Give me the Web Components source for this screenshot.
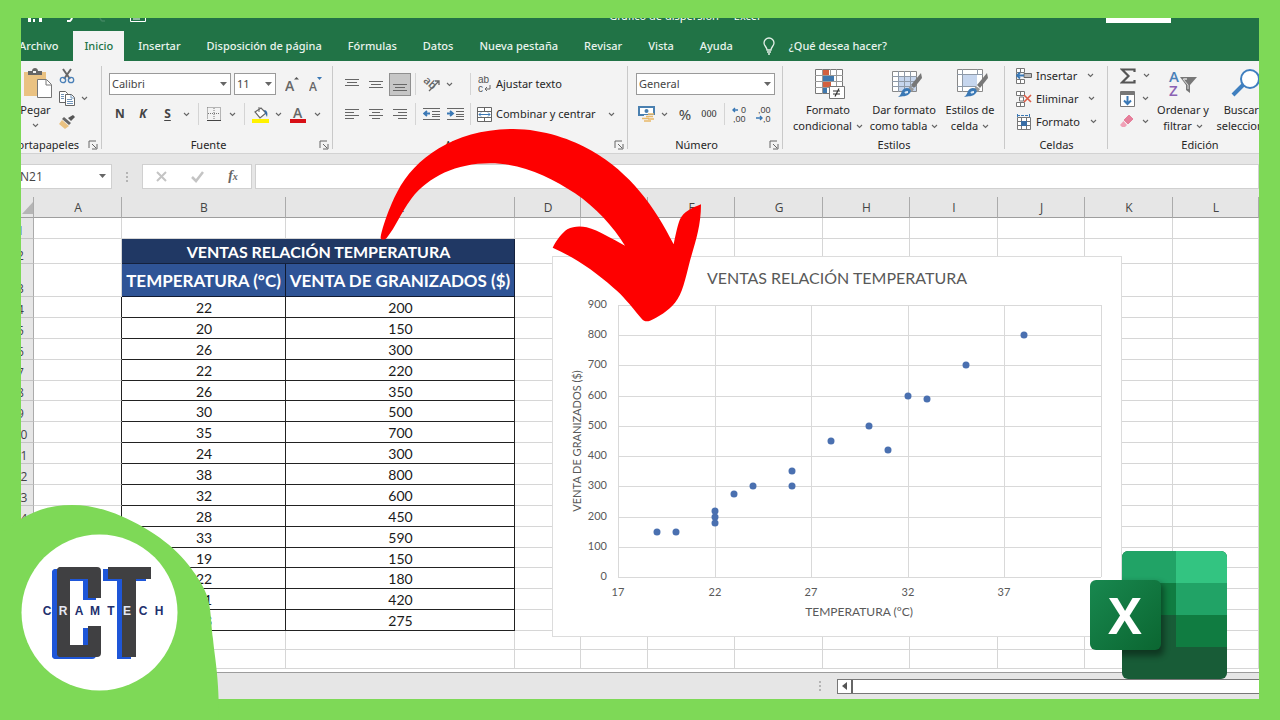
<!DOCTYPE html>
<html lang="es">
<head>
<meta charset="utf-8">
<title>Gráfico de dispersión - Excel</title>
<style>
  html, body { margin: 0; height: 100%; overflow: hidden; background: #7ed957; }
  body { font: 11px/16px "Noto Sans", "Open Sans", sans-serif; color: #262626; }
</style>
</head>
<body>
<video-cover>
  <excel-window></excel-window>
  <swoosh-arrow slot="overlay"></swoosh-arrow>
  <brand-badge slot="overlay"></brand-badge>
  <excel-logo slot="overlay"></excel-logo>
</video-cover>

<script>
const BASE = `
  :host { box-sizing: border-box; display: block; }
  *, *::before { box-sizing: border-box; }
  button { appearance: none; border: 0; padding: 0; margin: 0; background: none; font: inherit; color: inherit; display: flex; align-items: center; justify-content: center; white-space: nowrap; }
  svg { display: block; }
`;

function component(name, html, setup) {
  const template = document.createElement('template');
  template.innerHTML = html;
  customElements.define(name, class extends HTMLElement {
    constructor() {
      super();
      this.attachShadow({ mode: 'open' }).append(template.content.cloneNode(true));
    }
    connectedCallback() {
      if (setup && !this.ready) { this.ready = true; setup(this, this.shadowRoot); }
    }
  });
}

/* ---------- icons: [width, height, markup] ---------- */
const lines = (list) => `<path fill="none" stroke="#666" d="${list.map(([x, y, w]) => `M${x} ${y}.5h${w}`).join('')}"/>`;
const brush = `<path d="M31 5 21 17l3 3 8-10z" fill="#777"/><path d="m20 18 4 3-2 3-4-3z" fill="#999"/><path d="M17 20c3 0 5 3 3 5-3 4-8 3-12 4 3-2 3-4 4-6s3-3 5-3z" fill="#3a78b5"/><path d="M15 25c1-1 2-1 3-1" stroke="#dbe9f6" stroke-width="2" fill="none"/>`;
const ICONS = {
  chevron: [7, 5, `<path d="M1 1l2.500 2.500L6 1" fill="none" stroke="#666" stroke-width="1.100"/>`],
  launcher: [10, 10, `<path d="M1 8V1h7M4 4l4 4M9 4v5H4" fill="none" stroke="#666"/>`],
  save: [14, 13, `<path d="M0 0h14v13H0z" fill="#fff"/><path d="M3 8h8v5H3z" fill="#217346"/><path d="M5 10h2v3H5z" fill="#fff"/>`],
  undo: [14, 12, `<path d="M1 3h7a5 5 0 0 1 0 8H5" fill="none" stroke="#fff" stroke-width="2"/>`],
  redo: [14, 12, `<path d="M13 3H6a5 5 0 0 0 0 8h3" fill="none" stroke="#3f8560" stroke-width="1.500"/>`],
  window: [16, 13, `<path d="M.5.5h15v12H.5zM3 10h7" fill="none" stroke="#fff"/>`],
  bulb: [14, 18, `<path d="M5 13c0-3-3-4-3-7a5 5 0 0 1 10 0c0 3-3 4-3 7zM5 15h4M6 17h2" fill="none" stroke="#e4f0e8" stroke-width="1.300"/>`],
  paste: [30, 32, `<path d="M1 4h22v24H1z" fill="#eac282"/><path d="M5 3h4c0-4 6-4 6 0h4v4H5z" fill="#666"/><path d="M10 3h3v2h-3z" fill="#f3f3f3"/><path d="M14.500 11.500h9l5 5v13h-14z" fill="#fff" stroke="#777"/><path d="M23 12v5h5" fill="none" stroke="#777"/>`],
  cut: [16, 16, `<path d="M4 1l7 10M12 1 5 11" stroke="#666" stroke-width="2"/><circle cx="4" cy="12" r="2.700" fill="none" stroke="#4a80b8" stroke-width="1.300"/><circle cx="12" cy="12" r="2.700" fill="none" stroke="#4a80b8" stroke-width="1.300"/>`],
  copy: [16, 15, `<path d="M.5.5h6l2 2v9h-8z" fill="#fff" stroke="#666"/><path d="M6.500 3.500h6l3 3v8h-9z" fill="#fff" stroke="#666"/><path d="M12 4v3h3M8 8.500h5M8 10.500h6M8 12.500h6M2 3.500h3M2 5.500h3M2 7.500h3" stroke="#6f93b8" fill="none"/>`],
  painter: [16, 15, `<path d="M14 1l2 2-4 4-3-3z" fill="#555"/><path d="M5 3l7 6-2 2-7-6z" fill="#666"/><path d="M3 6l7 6-4 3-6-5z" fill="#eac282"/>`],
  grow: [14, 16, `<text x="0" y="15" font-size="14" font-weight="600" fill="#666">A</text><path d="M9 3.500 11.500 1 14 3.500z" fill="#555"/>`],
  shrink: [14, 16, `<text x="0" y="15" font-size="12" font-weight="600" fill="#666">A</text><path d="M8 1h5l-2.500 3z" fill="#3a78b5"/>`],
  borders: [14, 14, `<path d="M.5.5h13v12M.5.5v12M7 1v12M1 6.500h12" fill="none" stroke="#777" stroke-dasharray="1 1"/><path d="M0 13.500h14" stroke="#444"/>`],
  bucket: [17, 17, `<path d="M3 6l6-4 5 5-6 5z" fill="#fff" stroke="#666" stroke-width="1.200"/><path d="M7 6V1" stroke="#666"/><path d="M12 4c3 0 4 3 3 7l-2-4z" fill="#3a6ea5"/><path d="M0 13h17v4H0z" fill="#fff200"/>`],
  color: [16, 17, `<text x="3" y="12" font-size="14" font-weight="600" fill="#666">A</text><path d="M0 13h16v4H0z" fill="#d80f16"/>`],
  vtop: [15, 16, lines([[0, 3, 14], [2, 6, 10], [0, 9, 14]])],
  vmid: [15, 16, lines([[0, 5, 14], [2, 8, 10], [0, 11, 14]])],
  vbot: [15, 16, lines([[0, 8, 14], [2, 11, 10], [0, 14, 14]])],
  left: [15, 13, lines([[0, 1, 14], [0, 4, 9], [0, 7, 14], [0, 10, 9]])],
  center: [15, 13, lines([[0, 1, 14], [3, 4, 8], [0, 7, 14], [3, 10, 8]])],
  right: [15, 13, lines([[0, 1, 14], [5, 4, 9], [0, 7, 14], [5, 10, 9]])],
  orient: [17, 16, `<text x="1" y="8" font-size="11" font-weight="600" fill="#666" transform="rotate(42 4 5)">ab</text><path d="M6 15 16 5M12 5h4v4" stroke="#666" stroke-width="1.300" fill="none"/>`],
  outdent: [17, 14, lines([[0, 1, 17], [9, 4, 8], [9, 7, 8], [0, 12, 17], [9, 9, 8]]) + `<path d="M7 6.500H1M4 4 1 6.500 4 9" stroke="#3a78b5" stroke-width="1.800" fill="none"/>`],
  indent: [17, 14, lines([[0, 1, 17], [9, 4, 8], [9, 7, 8], [0, 12, 17], [9, 9, 8]]) + `<path d="M0 6.500h6M3 4l3 2.500L3 9" stroke="#3a78b5" stroke-width="1.800" fill="none"/>`],
  wrap: [14, 17, `<text class="s" x="0" y="7" font-size="10" fill="#555">ab</text><text class="s" x="0" y="16" font-size="10" fill="#555">c</text><path d="M12 9v4H7M9 11l-2 2 2 2" stroke="#666" fill="none"/>`],
  merge: [15, 15, `<path d="M.5.5h14v14H.5zM.5 4.500h14M.5 10.500h14M7.500 0v4M7.500 11v4" fill="#fff" stroke="#666"/><path d="M2 7.500h11M4 5.500l-2 2 2 2M11 5.500l2 2-2 2" stroke="#3a78b5" fill="none"/>`],
  money: [17, 16, `<path d="M1 1h15v8H1z" fill="#fff" stroke="#4a80b0" stroke-width="2"/><circle cx="8.500" cy="5" r="2" fill="#4a80b0"/><path d="M6 9h11v7H6z" fill="#f3f3f3"/><path d="M10 8h6M8 10.500h7M4 12.500h7M10 13h6M6 15h7" stroke="#e9b96a" stroke-width="1.500"/>`],
  lessdec: [15, 17, `<text class="s" x="9" y="7" font-size="9" fill="#444">0</text><text class="s" x="1" y="16" font-size="9" fill="#444">,00</text><path d="M6 4H1M3 2 1 4l2 2" stroke="#3a78b5" stroke-width="1.400" fill="none"/>`],
  moredec: [15, 17, `<text class="s" x="2" y="7" font-size="9" fill="#444">,00</text><text class="s" x="7" y="16" font-size="9" fill="#444">,0</text><path d="M0 12h6M4 10l2 2-2 2" stroke="#3a78b5" stroke-width="1.400" fill="none"/>`],
  conditional: [32, 32, `<path d="M1.500 1.500h27v24h-27z" fill="#fff" stroke="#777"/><path d="M8.500 1v25M16.500 1v25M22.500 1v25M1 7.500h28M1 13.500h28M1 19.500h28" stroke="#999"/><path d="M9 2h6v5H9zM9 14h8v5H9z" fill="#d2603f"/><path d="M9 8h11v5H9z" fill="#3f78ad"/><path d="M9 20h4v5H9z" fill="#3f78ad"/><path d="M15.500 18.500h15v12h-15z" fill="#fff" stroke="#777"/><path d="M19 23h7M19 26h7M25 20.500l-4 8" stroke="#333" stroke-width="1.200"/>`],
  table: [32, 32, `<path d="M2.500 3.500h24v20h-24z" fill="#fff" stroke="#888"/><path d="M9 9h17v14H9z" fill="#c6d6ee"/><path d="M8.500 3v21M14.500 3v21M20.500 3v21M2 8.500h25M2 13.500h25M2 18.500h25" stroke="#8f9aa8"/>${brush}`],
  cellstyle: [32, 32, `<path d="M1.500 1.500h25v22h-25z" fill="#fff" stroke="#888"/><path d="M7 7h14v11H7z" fill="#c6d6ee"/><path d="M6.500 1v23M21.500 1v6M1 6.500h26M1 18.500h19" stroke="#8f9aa8"/>${brush}`],
  insert: [16, 16, `<path d="M.5.500h8v4h-8zM4.500.5v4M.5 11.500h8v4h-8zM4.500 11.500v4M.5 4.500v7" fill="#fff" stroke="#777"/><path d="M8 5.500h7.500v4H8z" fill="#bbb" stroke="#666"/><path d="M8 7.500H1M4 4.500l-3 3 3 3" stroke="#3a78b5" stroke-width="1.800" fill="none"/>`],
  remove: [16, 16, `<path d="M.5.500h8v4h-8zM4.500.5v4M.5 11.500h8v4h-8zM4.500 11.500v4M3.500 6h4v4h-4z" fill="#fff" stroke="#777"/><path d="M8 4l7 7M15 4l-7 7" stroke="#dd5b45" stroke-width="1.600"/>`],
  format: [16, 16, `<path d="M1.500 3.500h13v12h-13zM1 7.500h14M1 11.500h14M5.500 3v13M10.500 3v13" fill="#fff" stroke="#777"/><path d="M5 7h6v5H5z" fill="#3a6ea5"/><path d="M1 1.500h13M1.500 0v3M13.500 0v3" stroke="#3a78b5" stroke-dasharray="3 1"/>`],
  sum: [16, 16, `<path d="M14.500 4V1.500H2L8.500 8 2 14.500h12.500V12" fill="none" stroke="#555" stroke-width="2.200"/>`],
  fill: [15, 16, `<path d="M.5.5h14v15H.5z" fill="#fff" stroke="#777"/><path d="M1 1h13v3H1z" fill="#777"/><path d="M7.500 5v8M4 9.500l3.500 3.500L11 9.500" stroke="#3a78b5" stroke-width="2" fill="none"/>`],
  eraser: [15, 13, `<path d="M9 0l4 4-5 5-4-4z" fill="#e67f9b" stroke="#e67f9b" stroke-linejoin="round"/><path d="M3.500 6l3.500 4-2 2H2L0 10z" fill="#f0a0b6"/>`],
  sort: [30, 32, `<text x="1" y="14" font-size="15" font-weight="600" fill="#4a80b8">A</text><text x="1" y="28" font-size="15" font-weight="600" fill="#8b62b3">Z</text><path d="M12 9h17l-7 8v8l-4-3v-5z" fill="#777"/><path d="M16 11h3l-4 0 5 6v4" fill="none" stroke="#ddd"/>`],
  search: [30, 32, `<circle cx="19" cy="11" r="9" fill="#fff" stroke="#3f7fbf" stroke-width="2"/><path d="M12 17 2 27" stroke="#3f7fbf" stroke-width="4"/>`],
  cancel: [11, 11, `<path d="M1 1l9 9M10 1l-9 9" stroke="#c4c4c4" stroke-width="2"/>`],
  accept: [13, 12, `<path d="M1 6l4 4 7-9" fill="none" stroke="#c4c4c4" stroke-width="2.500"/>`],
  down: [7, 4, `<path d="M0 0h7L3.500 4z" fill="#666"/>`],
  back: [5, 8, `<path d="M5 0v8L0 4z" fill="#555"/>`],
  dots: [3, 12, `<path d="M0 1h2v2H0zM0 5h2v2H0zM0 9h2v2H0z" fill="#b4b4b4"/>`],
};
component('ui-icon', `<style>${BASE} :host { flex: none; } text { font-family: "Open Sans", sans-serif; } .s { font-family: "Liberation Sans", sans-serif; }</style><div></div>`, (el, root) => {
  const [w, h, markup] = ICONS[el.getAttribute('name')];
  el.setAttribute('aria-hidden', 'true');
  root.querySelector('div').innerHTML = `<svg width="${w}" height="${h}" viewBox="0 0 ${w} ${h}">${markup}</svg>`;
});
const icon = (name) => `<ui-icon name="${name}"></ui-icon>`;
const chev = icon('chevron');

/* ---------- frame ---------- */
component('video-cover', `<style>${BASE}
  :host { position: relative; height: 100vh; padding: 18px 21px 21px; background: #7ed957; overflow: hidden; }
  .screen { height: 100%; overflow: hidden; }
</style><div class="screen"><slot></slot></div><slot name="overlay"></slot>`);

component('excel-window', `<style>${BASE}
  :host { display: flex; flex-direction: column; height: calc(100% + 18px); margin: -18px 0 0 -15px; background: #e6e6e6; }
  sheet-grid { flex: 1; min-height: 0; }
</style>
<title-bar></title-bar><ribbon-tabs></ribbon-tabs><ribbon-bar></ribbon-bar><formula-bar></formula-bar>
<sheet-grid></sheet-grid><sheet-footer></sheet-footer>`);

component('title-bar', `<style>${BASE}
  :host { display: grid; grid-template-columns: 104px 1fr auto 1fr; align-items: center; height: 31px; background: #217346; color: #fff; }
  .quick { display: flex; gap: 20px; padding-left: 22px; align-items: center; }
  .sign { justify-self: end; width: 65px; height: 14px; margin: 0 88px 0 0; background: #fff; }
</style>
<div class="quick"><button aria-label="Guardar">${icon('save')}</button><button aria-label="Deshacer">${icon('undo')}</button><button aria-label="Rehacer">${icon('redo')}</button><button aria-label="Ventana">${icon('window')}</button></div>
<span></span><span>Gráfico de dispersión&nbsp; -&nbsp; Excel</span><button class="sign" aria-label="Cuenta"></button>`);

component('ribbon-tabs', `<style>${BASE}
  :host { display: flex; height: 30px; background: #217346; color: #e9f3ed; font-weight: 500; }
  button { height: 30px; padding: 0 13px; flex: none; }
  button.on { background: #f3f3f3; color: #217346; padding: 0 11px; margin: 0 1px 0 2px; }
  .ask { gap: 13px; padding-left: 16px; }
</style>
<button>Archivo</button><button class="on">Inicio</button><button>Insertar</button><button>Disposición de página</button><button>Fórmulas</button><button>Datos</button><button>Nueva pestaña</button><button>Revisar</button><button>Vista</button><button>Ayuda</button><button class="ask">${icon('bulb')}¿Qué desea hacer?</button>`);

/* ---------- ribbon ---------- */
component('ribbon-group', `<style>${BASE}
  :host { display: flex; flex-direction: column; flex: none; height: 89px; background: linear-gradient(#c9c9c9, #c9c9c9) right 2px / 1px 83px no-repeat; }
  .body { flex: 1; min-height: 0; }
  .foot { display: flex; align-items: center; height: 16px; }
  .foot span { flex: 1; text-align: center; }
  button { width: 18px; height: 16px; }
</style>
<div class="body"><slot></slot></div><div class="foot"><span></span></div>`, (el, root) => {
  root.querySelector('span').textContent = el.getAttribute('label');
  if (el.hasAttribute('launcher')) {
    root.querySelector('.foot').insertAdjacentHTML('beforeend', `<button aria-label="Más opciones de ${el.getAttribute('label')}">${icon('launcher')}</button>`);
  }
});

component('drop-box', `<style>${BASE}
  :host { position: relative; height: 22px; }
  select { appearance: none; width: 100%; height: 22px; padding: 0 2px; margin: 0; border: 1px solid #9a9a9a; border-radius: 0; background: #fff; font: 11px/16px "Noto Sans", sans-serif; color: #444; }
  ui-icon { position: absolute; right: 4px; top: 9px; }
</style><select></select><ui-icon name="down"></ui-icon>`, (el, root) => {
  const select = root.querySelector('select');
  select.setAttribute('aria-label', el.getAttribute('label'));
  select.add(new Option(el.getAttribute('value')));
});

component('ribbon-bar', `<style>${BASE}
  :host { display: flex; height: 93px; padding-top: 3px; background: #f3f3f3; border-bottom: 1px solid #d2d2d2; overflow: hidden; }
  .two { display: grid; grid-template-rows: 30px 30px; padding: 5px 0 0 7px; }
  .row { display: grid; align-items: center; }
  .row > * { min-width: 0; }
  .stack { display: grid; grid-auto-rows: 23px; }
  .stack button { gap: 4px; justify-content: start; }
  .flex { display: flex; }
  .big { flex-direction: column; justify-content: start; padding-top: 4px; height: 70px; }
  .big span { display: flex; align-items: center; gap: 4px; }
  .big ui-icon + span { margin-top: 2px; }
  .paste { width: 53px; padding-left: 6px; }
  .paste > ui-icon:first-child { margin-left: 4px; }
  .paste > ui-icon:last-child { margin-top: 5px; }
  .styles .big > ui-icon { margin-left: 4px; }
  .sep { justify-self: center; width: 1px; height: 22px; background: #d4d4d4; }
  .f1 { grid-template-columns: 122px 45px 28px 20px; }
  .f1 drop-box + drop-box { margin-left: 3px; width: 42px; }
  .f1 button { padding-left: 4px; }
  .f2 { grid-template-columns: 22px 24px 25px 12px 12px 20px 16px 8px 24px 12px 28px 10px; }
  .f2 .t { font-size: 12px; font-weight: 700; color: #444; }
  .a { grid-template-columns: 24px 24px 24px 7px 24px 24px 6px 23px auto 1fr; }
  .pressed { width: 22px; height: 23px; margin-left: 1px; background: #c6c6c6; border: 1px solid #8f8f8f; }
  .n2 { grid-template-columns: 22px 14px 28px 20px 11px 19px 28px; }
  .n2 .t { font-size: 15px; color: #444; }
  .n2 .z { font-size: 9px; font-weight: 500; color: #444; }
  .wide { margin: 4px 8px 0 1px; }
  i { font-weight: 700; } u { text-underline-offset: 2px; }
  .c ui-icon:last-child { margin-left: 6px; }
  .tools button { gap: 7px; }
</style>
<ribbon-group label="Portapapeles" launcher style="width:96px"><div class="flex">
  <button class="big paste">${icon('paste')}<span>Pegar</span>${chev}</button>
  <div class="stack"><button aria-label="Cortar">${icon('cut')}</button><button aria-label="Copiar" style="gap:6px">${icon('copy')}${chev}</button><button aria-label="Copiar formato">${icon('painter')}</button></div>
</div></ribbon-group>
<ribbon-group label="Fuente" launcher style="width:231px"><div class="two">
  <div class="row f1"><drop-box label="Fuente" value="Calibri"></drop-box><drop-box label="Tamaño de fuente" value="11"></drop-box><button aria-label="Aumentar tamaño">${icon('grow')}</button><button aria-label="Disminuir tamaño">${icon('shrink')}</button></div>
  <div class="row f2"><button class="t">N</button><button class="t"><i>K</i></button><button class="t"><u>S</u></button><button aria-label="Subrayado">${chev}</button><span class="sep"></span><button aria-label="Bordes">${icon('borders')}</button><button aria-label="Tipos de borde">${chev}</button><span class="sep"></span><button aria-label="Relleno">${icon('bucket')}</button><button aria-label="Colores de relleno">${chev}</button><button aria-label="Color de fuente">${icon('color')}</button><button aria-label="Colores de fuente">${chev}</button></div>
</div></ribbon-group>
<ribbon-group label="Alineación" launcher style="width:295px"><div class="two">
  <div class="row a"><button aria-label="Arriba">${icon('vtop')}</button><button aria-label="Medio">${icon('vmid')}</button><button class="pressed" aria-label="Abajo">${icon('vbot')}</button><span class="sep"></span><button aria-label="Orientación">${icon('orient')}</button><button aria-label="Orientaciones" style="width:12px">${chev}</button><span class="sep"></span><button aria-label="Ajustar">${icon('wrap')}</button><button class="text">Ajustar texto</button></div>
  <div class="row a"><button aria-label="Izquierda">${icon('left')}</button><button aria-label="Centro">${icon('center')}</button><button aria-label="Derecha">${icon('right')}</button><span class="sep"></span><button aria-label="Disminuir sangría">${icon('outdent')}</button><button aria-label="Aumentar sangría">${icon('indent')}</button><span class="sep"></span><button aria-label="Combinar">${icon('merge')}</button><button class="text">Combinar y centrar</button><button aria-label="Opciones de combinar">${chev}</button></div>
</div></ribbon-group>
<ribbon-group label="Número" launcher style="width:155px"><div class="two">
  <drop-box class="wide" label="Formato de número" value="General"></drop-box>
  <div class="row n2"><button aria-label="Moneda">${icon('money')}</button><button aria-label="Monedas">${chev}</button><button class="t">%</button><button class="z">000</button><span class="sep"></span><button aria-label="Aumentar decimales">${icon('lessdec')}</button><button aria-label="Disminuir decimales">${icon('moredec')}</button></div>
</div></ribbon-group>
<ribbon-group label="Estilos" style="width:222px"><div class="flex styles" style="padding-left:9px; gap:4px">
  <button class="big" style="width:72px">${icon('conditional')}<span>Formato</span><span>condicional ${chev}</span></button>
  <button class="big" style="width:72px">${icon('table')}<span>Dar formato</span><span>como tabla ${chev}</span></button>
  <button class="big" style="width:52px">${icon('cellstyle')}<span>Estilos de</span><span>celda ${chev}</span></button>
</div></ribbon-group>
<ribbon-group label="Celdas" style="width:103px"><div class="stack c" style="padding-left:11px">
  <button>${icon('insert')}Insertar ${chev}</button><button>${icon('remove')}Eliminar ${chev}</button><button>${icon('format')}Formato ${chev}</button>
</div></ribbon-group>
<ribbon-group label="Edición" style="width:184px"><div class="flex" style="padding-left:12px">
  <div class="stack tools" style="width:34px"><button aria-label="Autosuma">${icon('sum')}${chev}</button><button aria-label="Rellenar">${icon('fill')}${chev}</button><button aria-label="Borrar">${icon('eraser')}${chev}</button></div>
  <button class="big" style="width:58px">${icon('sort')}<span>Ordenar y</span><span>filtrar ${chev}</span></button>
  <button class="big" style="width:67px">${icon('search')}<span>Buscar y</span><span>seleccionar</span></button>
</div></ribbon-group>`);

/* ---------- formula bar ---------- */
component('formula-bar', `<style>${BASE}
  :host { display: flex; align-items: center; height: 43px; padding: 10px 0 8px; background: #e6e6e6; }
  .name { position: relative; width: 106px; }
  input { display: block; width: 100%; height: 25px; margin: 0; padding: 0 13px; border: 1px solid #d0d0d0; border-radius: 0; background: #fff; font: 12px/16px "Open Sans", sans-serif; color: #444; }
  .name ui-icon { position: absolute; right: 6px; top: 10px; }
  .dots { margin: 0 13px 0 14px; }
  .tools { display: grid; grid-template-columns: repeat(3, 36px); width: 110px; height: 25px; background: #fff; border: 1px solid #d0d0d0; margin-right: 3px; }
  .fx { font: italic 700 14px/16px "Liberation Serif", serif; color: #666; }
  .fx small { font-size: 10px; }
  .formula { flex: 1; }
</style>
<div class="name"><input value="N21" aria-label="Cuadro de nombres"><ui-icon name="down"></ui-icon></div>
<ui-icon class="dots" name="dots"></ui-icon>
<div class="tools"><button aria-label="Cancelar">${icon('cancel')}</button><button aria-label="Introducir">${icon('accept')}</button><button class="fx"><span>f<small>x</small></span></button></div>
<input class="formula" aria-label="Barra de fórmulas">`);

/* ---------- sheet ---------- */
const SALES = [[22,200],[20,150],[26,300],[22,220],[26,350],[30,500],[35,700],[24,300],[38,800],[32,600],[28,450],[33,590],[19,150],[22,180],[31,420],[23,275]];
const COLUMNS = { A: 88, B: 164, C: 229, D: 66, E: 67, F: 87, G: 88, H: 87, I: 88, J: 87, K: 88, L: 0 };

component('sheet-grid', `<style>${BASE}
  :host { position: relative; overflow: hidden; background: #fff; }
  table { width: 100%; table-layout: fixed; border-collapse: separate; border-spacing: 0; font: 14px/16px Lato, sans-serif; color: #1a1a1a; }
  th, td { padding: 2px 0 0 1px; border: 0 solid #d6d6d6; border-width: 0 1px 1px 0; text-align: center; overflow: hidden; height: 21px; }
  th { background: #e6e6e6; font: 12px/14px "Open Sans", sans-serif; color: #444; border-color: #ababab; }
  thead th { border-bottom-color: #9e9e9e; }
  tbody th { padding: 0 0 0 2px; vertical-align: bottom; border-bottom-color: #c4c4c4; }
  .corner svg { margin: 0 0 0 15px; }
  .short > * { height: 20px; }
  .low > * { height: 19px; }
  .title > * { height: 25px; }
  .title td[colspan] { background: #203864; border-color: #14213d; color: #fff; font-weight: 700; font-size: 16px; }
  .head > * { height: 33px; }
  .head .h { background: #2f5496; border-color: #101a30; color: #fff; font-weight: 700; font-size: 17px; padding-left: 0; }
  .edge { border-right-color: #222; }
  .v { border-color: #222; }
  scatter-chart { position: absolute; left: 546px; top: 59px; }
</style>
<table><colgroup></colgroup><thead><tr></tr></thead><tbody></tbody></table>
<scatter-chart></scatter-chart>`, (el, root) => {
  const names = Object.keys(COLUMNS);
  root.querySelector('colgroup').innerHTML = '<col style="width:28px">' + names.map((n) => COLUMNS[n] ? `<col style="width:${COLUMNS[n]}px">` : '<col>').join('');
  root.querySelector('thead tr').innerHTML = `<th class="corner" aria-label="Seleccionar todo"><svg width="11" height="12"><path d="M11 0v12H0z" fill="#b5b5b5"/></svg></th>` + names.map((n) => `<th scope="col">${n}</th>`).join('');
  const blank = (n) => '<td></td>'.repeat(n);
  const rows = [
    ['', blank(12)],
    ['title', blank(1) + '<td colspan="2">VENTAS RELACIÓN TEMPERATURA</td>' + blank(9)],
    ['head', blank(1) + '<td class="h">TEMPERATURA (°C)</td><td class="h">VENTA DE GRANIZADOS ($)</td>' + blank(9)],
    ...SALES.map(([t, v], i) => [i % 8 === 4 ? 'short' : '', `<td class="edge"></td><td class="v">${t}</td><td class="v">${v}</td>` + blank(9)]),
    ['low', blank(12)], ['low', blank(12)],
  ];
  root.querySelector('tbody').innerHTML = rows.map(([cls, cells], i) => `<tr class="${cls}"><th scope="row">${i + 1}</th>${cells}</tr>`).join('');
});

component('scatter-chart', `<style>${BASE}
  :host { width: 570px; height: 381px; background: #fff; border: 1px solid #dcdcdc; }
  text { font: 12px Lato, sans-serif; fill: #595959; text-anchor: middle; }
  .title { font-size: 16px; }
  .n, .side { font-size: 11px; }
  .y { text-anchor: end; }
  path { stroke: #d9d9d9; fill: none; }
  circle { fill: #4a70b0; }
</style><svg width="568" height="379" viewBox="0 0 568 379" role="img" aria-label="Gráfico de dispersión"></svg>`, (el, root) => {
  const px = (t) => Math.round(65 + (t - 17) * 19.32);
  const py = (v) => Math.round(320 - v * 0.3022);
  let grid = '', text = '';
  for (let v = 0; v <= 900; v += 100) {
    grid += `M65 ${py(v)}.5H548`;
    text += `<text class="n y" x="54" y="${py(v) + 3}">${v}</text>`;
  }
  for (let t = 17; t <= 42; t += 5) {
    grid += `M${px(t)}.5 48V320`;
    if (t < 42) text += `<text class="n" x="${px(t)}" y="339">${t}</text>`;
  }
  root.querySelector('svg').innerHTML = `<path d="${grid}"/>${text}
    <text class="title" x="284" y="27">VENTAS RELACIÓN TEMPERATURA</text>
    <text x="306" y="359">TEMPERATURA (°C)</text>
    <text class="side" transform="translate(28 184) rotate(-90)">VENTA DE GRANIZADOS ($)</text>
    ${SALES.map(([t, v]) => `<circle cx="${px(t)}" cy="${py(v)}" r="3.500"/>`).join('')}`;
});

component('sheet-footer', `<style>${BASE}
  :host { display: flex; align-items: center; height: 27px; background: #e6e6e6; border-top: 1px solid #9c9c9c; justify-content: flex-end; }
  .bar { display: flex; width: 422px; height: 15px; margin-left: 15px; background: #fff; border: 1px solid #777; border-right: 0; }
  button { width: 15px; border-right: 2px solid #666; }
</style>${icon('dots')}<div class="bar"><button aria-label="Desplazar a la izquierda">${icon('back')}</button></div>`);

/* ---------- overlays ---------- */
component('swoosh-arrow', `<style>${BASE} :host { position: absolute; left: 340px; top: 110px; pointer-events: none; }</style>
<svg width="400" height="230" viewBox="0 0 1200 690" aria-hidden="true"><path fill="#fe0000" d="M122 385C122 365 150 285 172 245C225 143 345 57 520 57C610 57 700 90 755 122C870 188 945 290 1001 403C1008 370 1013 345 1020 328C1032 303 1055 295 1083 283C1083 350 1065 400 1050 452C1035 510 1028 550 1005 578C985 603 955 620 930 632C920 636 912 634 905 626C865 578 850 558 820 533C765 484 705 443 638 413C650 390 665 370 682 358C700 348 722 348 740 352C778 362 815 387 855 407C820 350 765 290 705 250C630 200 545 160 450 160C350 160 265 200 215 265C180 312 168 350 140 384C134 390 124 390 122 385Z"/></svg>`);

component('brand-badge', `<style>${BASE}
  :host { position: absolute; left: 0; bottom: 0; width: 220px; height: 215px; }
  .name { position: absolute; left: 39px; top: 98px; width: 128px; display: grid; grid-template-columns: repeat(8, 1fr); font: 700 12px/16px "Liberation Sans Narrow", "Liberation Sans", sans-serif; color: #22306e; text-align: center; }
  .light { color: #e4e8f5; }
</style>
<svg width="220" height="215" viewBox="0 0 220 215" role="img" aria-label="Logotipo CT">
  <path fill="#7ed957" d="M0 30C25 8 45 0 72 0C98 0 122 10 143 22C175 40 192 62 202 80C212 98 210 110 213 134C215 155 219 170 219 215H0Z"/>
  <circle cx="99.500" cy="107.500" r="78" fill="#fff"/>
  <defs><g id="mark"><rect x="57" y="62" width="13" height="90" rx="4"/><rect x="57" y="62" width="44" height="12" rx="4"/><rect x="57" y="140" width="44" height="12" rx="4"/><rect x="88" y="66" width="13" height="27"/><rect x="88" y="121" width="13" height="27"/><rect x="108" y="62" width="43" height="12"/><rect x="122" y="62" width="14" height="90"/></g></defs>
  <use href="#mark" x="-5" y="2" fill="#1e56d8"/><use href="#mark" fill="#404042"/>
</svg>
<div class="name"><span>C</span><span class="light">R</span><span>A</span><span>M</span><span>T</span><span class="light">E</span><span>C</span><span>H</span></div>`);

component('excel-logo', `<style>${BASE}
  :host { position: absolute; right: 53px; bottom: 41px; }
  text { font: 700 50px "Open Sans", sans-serif; }
</style>
<svg width="137" height="128" viewBox="0 0 137 128" role="img" aria-label="Excel">
  <defs><clipPath id="doc"><rect x="32" width="105" height="128" rx="6"/></clipPath>
  <linearGradient id="tile" x2="1" y2="1"><stop stop-color="#18884f"/><stop offset="1" stop-color="#0b6631"/></linearGradient>
  <filter id="soft" x="-20%" y="-20%" width="140%" height="140%"><feGaussianBlur stdDeviation="3"/></filter></defs>
  <g clip-path="url(#doc)"><path fill="#185c37" d="M32 0h105v128H32z"/><path fill="#21a366" d="M32 0h54v32H32zM86 32h51v32H86z"/><path fill="#33c481" d="M86 0h51v32H86z"/><path fill="#107c41" d="M32 32h54v32H32zM86 64h51v32H86z"/>
  <rect x="2" y="32" width="72" height="73" rx="6" opacity=".4" filter="url(#soft)"/></g>
  <rect y="29" width="71" height="70" rx="6" fill="url(#tile)"/>
  <text x="35" y="83" fill="#fff" text-anchor="middle">X</text>
</svg>`);
</script>
</body>
</html>
